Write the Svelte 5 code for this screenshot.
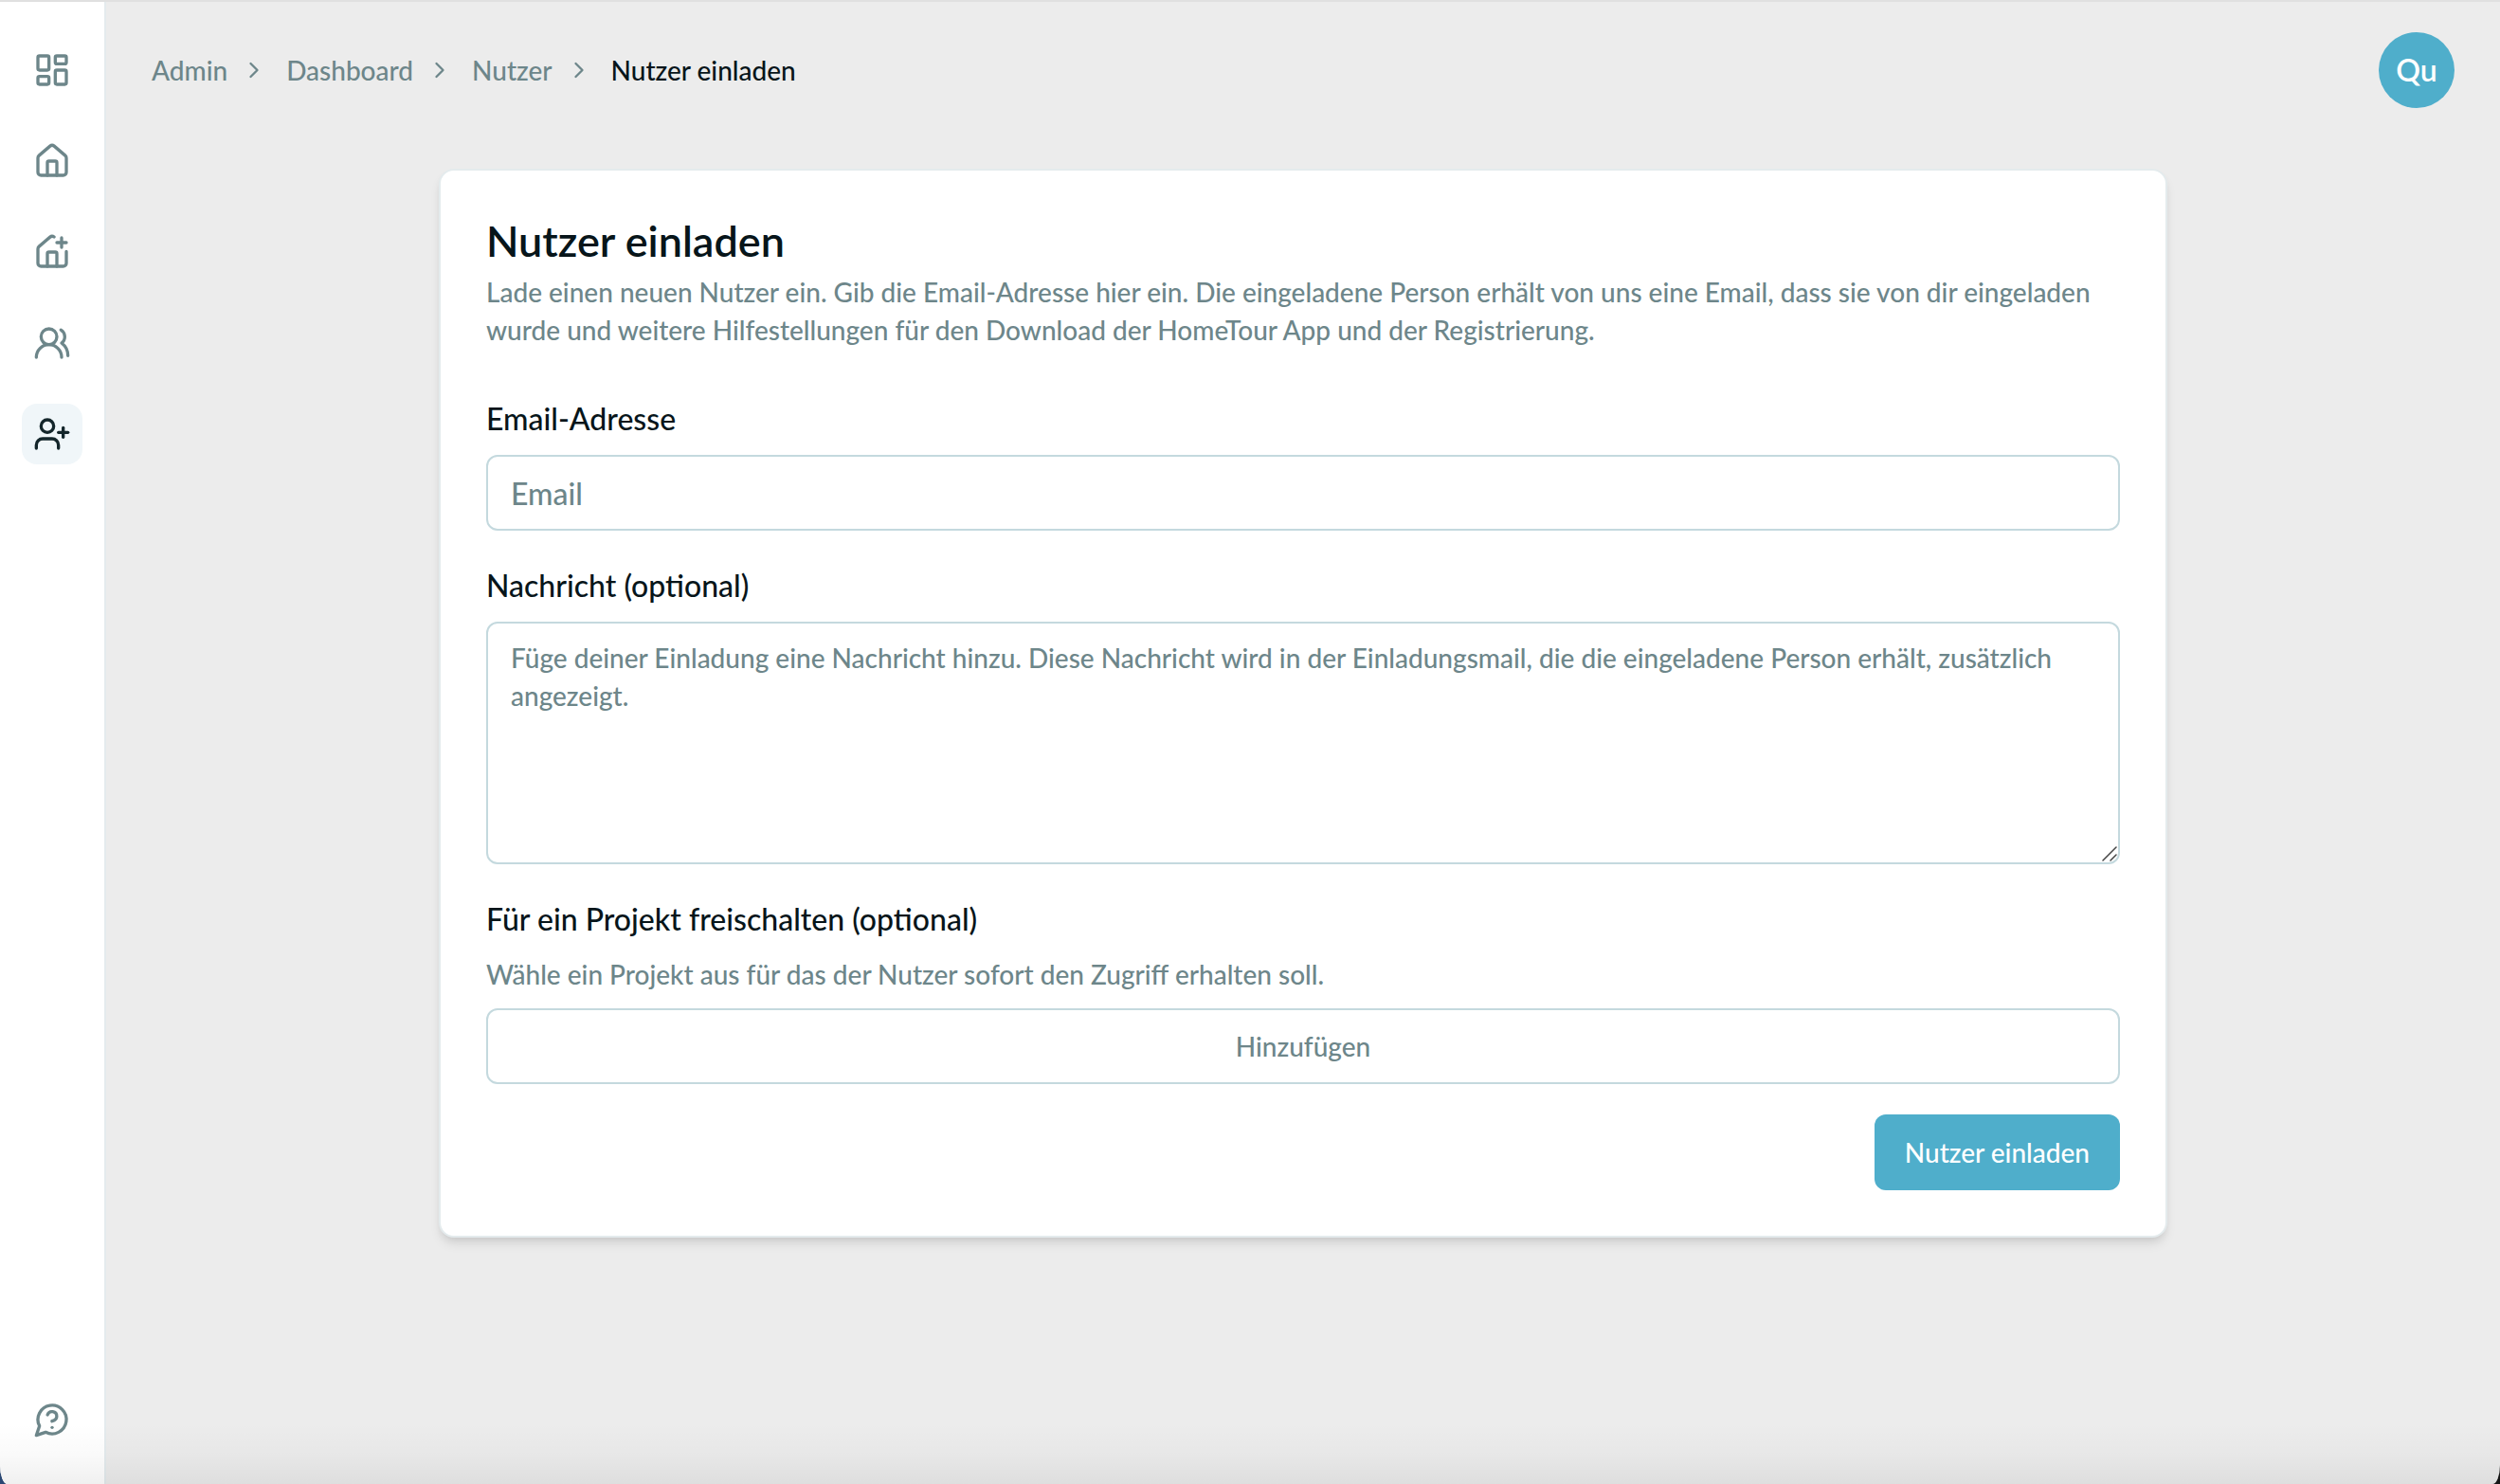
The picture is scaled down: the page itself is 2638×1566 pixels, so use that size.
<script lang="ts">
  let email = $state('');
  let message = $state('');

  const door = 'M15 21v-8a1 1 0 0 0-1-1h-4a1 1 0 0 0-1 1v8';
  const nav = [
    {
      label: 'Dashboard',
      paths: ['M4 3h5a1 1 0 0 1 1 1v7a1 1 0 0 1-1 1H4a1 1 0 0 1-1-1V4a1 1 0 0 1 1-1z',
        'M15 3h5a1 1 0 0 1 1 1v3a1 1 0 0 1-1 1h-5a1 1 0 0 1-1-1V4a1 1 0 0 1 1-1z',
        'M15 12h5a1 1 0 0 1 1 1v7a1 1 0 0 1-1 1h-5a1 1 0 0 1-1-1v-7a1 1 0 0 1 1-1z',
        'M4 16h5a1 1 0 0 1 1 1v3a1 1 0 0 1-1 1H4a1 1 0 0 1-1-1v-3a1 1 0 0 1 1-1z'],
      active: false
    },
    {
      label: 'Projekte',
      paths: [door, 'M3 10a2 2 0 0 1 .709-1.528l7-5.999a2 2 0 0 1 2.582 0l7 5.999A2 2 0 0 1 21 10v9a2 2 0 0 1-2 2H5a2 2 0 0 1-2-2z'],
      active: false
    },
    {
      label: 'Projekt anlegen',
      paths: [door, 'M13.22 2.416a2 2 0 0 0-2.511.057l-7 5.999A2 2 0 0 0 3 10v9a2 2 0 0 0 2 2h14a2 2 0 0 0 2-2v-7.354', 'M15 6h6', 'M18 3v6'],
      active: false
    },
    {
      label: 'Nutzer',
      paths: ['M18 21a8 8 0 0 0-16 0', 'M15 8a5 5 0 1 1-10 0a5 5 0 1 1 10 0z', 'M22 20c0-3.37-2-6.5-4-8a5 5 0 0 0-.45-8.3'],
      active: false
    },
    {
      label: 'Nutzer einladen',
      paths: ['M16 21v-2a4 4 0 0 0-4-4H6a4 4 0 0 0-4 4v2', 'M13 7a4 4 0 1 1-8 0a4 4 0 1 1 8 0z', 'M19 8v6', 'M22 11h-6'],
      active: true
    }
  ];
  const help = ['M7.9 20A9 9 0 1 0 4 16.1L2 22Z', 'M9.09 9a3 3 0 0 1 5.83 1c0 2-3 3-3 3', 'M12 17h.01'];
  const crumbs = ['Admin', 'Dashboard', 'Nutzer'];
</script>

{#snippet icon(paths: string[])}
  <svg class="icon" viewBox="0 0 24 24" aria-hidden="true">
    {#each paths as d}<path {d} />{/each}
  </svg>
{/snippet}

<div class="window">
  <aside>
    <nav aria-label="Hauptnavigation">
      {#each nav as item}
        <a href="#top" class="nav-item" class:active={item.active} aria-label={item.label}>{@render icon(item.paths)}</a>
      {/each}
    </nav>
    <a href="#help" class="nav-item" aria-label="Hilfe">{@render icon(help)}</a>
  </aside>

  <div class="page">
    <header>
      <ol class="crumbs">
        {#each crumbs as crumb}
          <li>
            <a href="#top">{crumb}</a>
            <svg class="chevron" viewBox="0 0 24 24" aria-hidden="true"><path d="m9 18 6-6-6-6" /></svg>
          </li>
        {/each}
        <li aria-current="page">Nutzer einladen</li>
      </ol>
      <button type="button" class="avatar">Qu</button>
    </header>

    <main>
      <form class="card">
        <div class="intro">
          <h1>Nutzer einladen</h1>
          <p>
            Lade einen neuen Nutzer ein. Gib die Email-Adresse hier ein. Die eingeladene Person erhält von uns
            eine Email, dass sie von dir eingeladen wurde und weitere Hilfestellungen für den Download der
            HomeTour App und der Registrierung.
          </p>
        </div>

        <div class="fields">
          <div class="field">
            <label for="email">Email-Adresse</label>
            <input id="email" type="email" placeholder="Email" bind:value={email} />
          </div>

          <div class="field">
            <label for="message">Nachricht (optional)</label>
            <div class="area">
              <textarea
                id="message"
                bind:value={message}
                placeholder="Füge deiner Einladung eine Nachricht hinzu. Diese Nachricht wird in der Einladungsmail, die die eingeladene Person erhält, zusätzlich angezeigt."
              ></textarea>
              <svg class="grip" viewBox="0 0 16 16" aria-hidden="true"><path d="M1 15 15 1M9 15l6-6" /></svg>
            </div>
          </div>

          <div class="field">
            <label for="project">Für ein Projekt freischalten (optional)</label>
            <div class="project">
              <p>Wähle ein Projekt aus für das der Nutzer sofort den Zugriff erhalten soll.</p>
              <button id="project" type="button" class="outline">Hinzufügen</button>
            </div>
          </div>
        </div>

        <button type="button" class="submit">Nutzer einladen</button>
      </form>
    </main>
  </div>
</div>

<style>
  :global(body) {
    margin: 0;
    background: linear-gradient(to right, #2a4773 50%, #151515 50%);
  }

  .window {
    --ink: #07151a;
    --muted: #6d868a;
    --accent: #4faecb;
    --line: #c4d9de;
    --soft: #e4ebed;
    position: relative;
    display: flex;
    box-sizing: border-box;
    min-height: 100vh;
    border-top: 2px solid #e0e0e0;
    border-radius: 0 0 8px 8px / 0 0 20px 20px;
    overflow: hidden;
    background: #ececec;
    color: var(--ink);
    font-family: Lato, 'Liberation Sans', sans-serif;
    font-size: 28px;
    font-weight: 500;
    line-height: 40px;
  }

  .window::after {
    content: '';
    position: absolute;
    inset: auto 0 0;
    height: 64px;
    background: linear-gradient(to bottom, transparent, rgb(0 0 0 / 2%) 50%, rgb(0 0 0 / 6%));
    pointer-events: none;
  }

  aside {
    display: flex;
    flex-direction: column;
    justify-content: space-between;
    align-items: center;
    box-sizing: border-box;
    flex: none;
    width: 112px;
    padding: 40px 0 36px;
    border-right: 2px solid var(--soft);
    background: #fff;
  }

  nav {
    display: grid;
    gap: 32px;
  }

  .nav-item {
    display: grid;
    place-items: center;
    width: 64px;
    height: 64px;
    border-radius: 16px;
    color: var(--muted);
  }

  .nav-item.active {
    background: #f0f6f9;
    color: #14262b;
  }

  svg {
    fill: none;
    stroke: currentColor;
    stroke-width: 2;
    stroke-linecap: round;
    stroke-linejoin: round;
  }

  .icon {
    width: 40px;
    height: 40px;
  }

  .page {
    flex: 1;
    min-width: 0;
  }

  header {
    display: flex;
    justify-content: space-between;
    align-items: center;
    height: 144px;
    padding: 0 48px;
  }

  .crumbs {
    display: flex;
    align-items: center;
    gap: 20px;
    margin: 0;
    padding: 0;
    list-style: none;
  }

  .crumbs li {
    display: flex;
    align-items: center;
    gap: 14px;
  }

  .crumbs a {
    color: var(--muted);
    text-decoration: none;
  }

  .chevron {
    width: 28px;
    height: 28px;
    color: var(--muted);
  }

  button {
    height: 80px;
    padding: 0 32px;
    border: 0;
    border-radius: 12px;
    font: inherit;
    cursor: pointer;
  }

  .avatar {
    width: 80px;
    padding: 0;
    border-radius: 50%;
    background: var(--accent);
    color: #fff;
    font-size: 32px;
    font-weight: 600;
  }

  main {
    padding: 32px 48px;
  }

  .card {
    display: flex;
    flex-direction: column;
    box-sizing: border-box;
    max-width: 1824px;
    margin: 0 auto;
    padding: 48px;
    border: 2px solid var(--soft);
    border-radius: 16px;
    background: #fff;
    box-shadow: 0 8px 12px -2px rgb(0 0 0 / 10%), 0 4px 8px -4px rgb(0 0 0 / 10%);
  }

  .intro {
    display: grid;
    gap: 8px;
    margin-bottom: 56px;
  }

  h1 {
    margin: 0;
    font-size: 45px;
    font-weight: 600;
    line-height: 52px;
  }

  p {
    margin: 0;
    color: var(--muted);
  }

  .fields {
    display: grid;
    gap: 40px;
    margin-bottom: 32px;
  }

  .field {
    display: grid;
    gap: 20px;
  }

  label {
    font-size: 32px;
    line-height: 36px;
  }

  input,
  textarea {
    display: block;
    box-sizing: border-box;
    width: 100%;
    border: 2px solid var(--line);
    border-radius: 12px;
    background: #fff;
    color: var(--ink);
    font: inherit;
  }

  input {
    height: 80px;
    padding: 0 24px;
    font-size: 32px;
  }

  textarea {
    height: 256px;
    padding: 16px 24px;
    resize: vertical;
  }

  textarea::-webkit-resizer {
    background: transparent;
  }

  input::placeholder,
  textarea::placeholder {
    color: var(--muted);
    opacity: 1;
  }

  .area {
    position: relative;
  }

  .grip {
    position: absolute;
    right: 3px;
    bottom: 3px;
    width: 16px;
    height: 16px;
    color: #444;
    stroke-width: 1.5;
    pointer-events: none;
  }

  .project {
    display: grid;
    gap: 16px;
  }

  .outline {
    border: 2px solid var(--line);
    background: #fff;
    color: var(--muted);
  }

  .submit {
    align-self: flex-end;
    background: var(--accent);
    color: #fff;
  }
</style>
